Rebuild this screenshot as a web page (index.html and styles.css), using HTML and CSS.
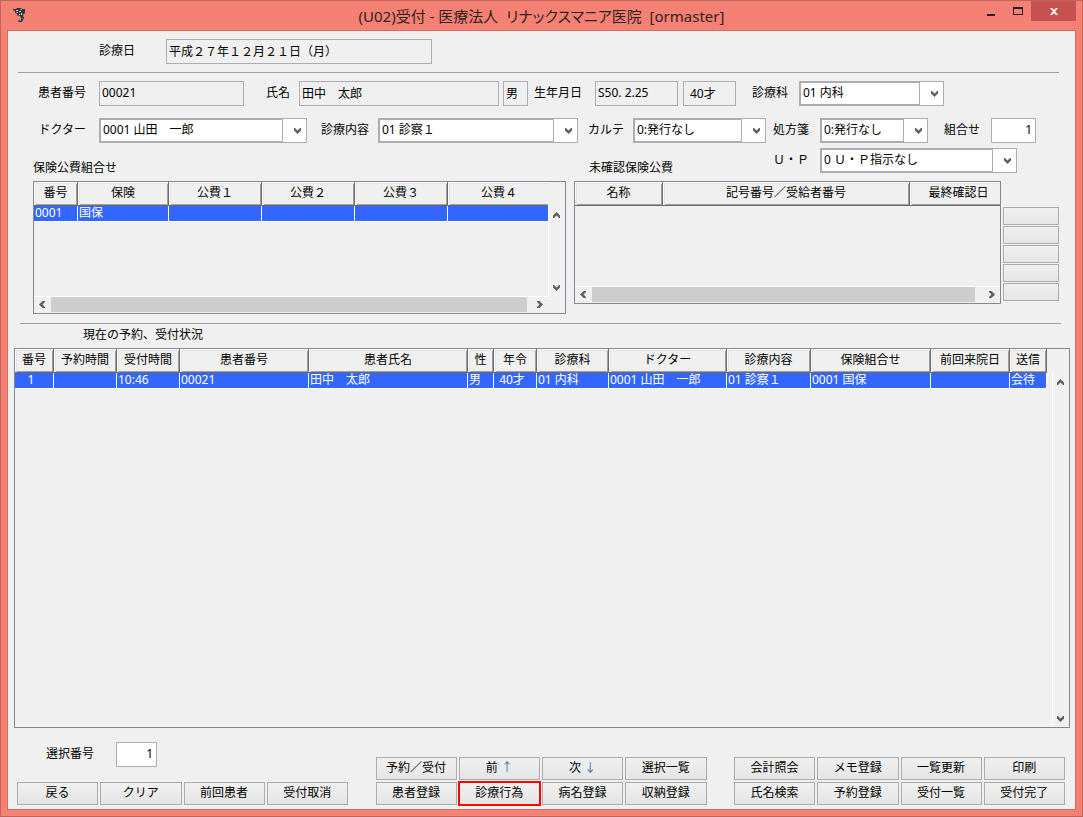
FILE: index.html
```html
<!DOCTYPE html>
<html lang="ja">
<head>
<meta charset="utf-8">
<title>(U02)受付 - 医療法人 リナックスマニア医院 [ormaster]</title>
<link rel="stylesheet" href="styles.css">
</head>
<body>
<svg class="defs" aria-hidden="true">
  <symbol id="down" viewBox="0 0 7 6"><path d="M0 0h1l2.500 2.500L6 0h1v2.500L3.500 6 0 2.500z" fill="#606060"/></symbol>
  <symbol id="up" viewBox="0 0 7 6"><path d="M0 6h1l2.500-2.500L6 6h1V3.500L3.500 0 0 3.500z" fill="#606060"/></symbol>
  <symbol id="left" viewBox="0 0 6 7"><path d="M6 0v1L3.500 3.500 6 6v1H3.500L0 3.500 3.500 0z" fill="#606060"/></symbol>
  <symbol id="right" viewBox="0 0 6 7"><path d="M0 0v1l2.500 2.500L0 6v1h2.500L6 3.500 2.500 0z" fill="#606060"/></symbol>
</svg>
<div class="window">
  <header class="titlebar">
    <svg class="app-icon" viewBox="0 0 14 16" width="14" height="16" aria-hidden="true">
      <path d="M0 1h3l1-1h4l1 1h3v4l-1 1v4l-1 2-1 2H6l-1-1 1-1h2v-2L7 8H6L4 7V6L2 5V3L0 2z" fill="#33363a"/>
      <path d="M3 2h2v1H3zM6 3h2v1H6zM4 4h1v1H4zM8 5h1v2H8zM6 6h1v1H6z" fill="#e8e8e8"/>
      <path d="M10 6h1v3h-1zM9 10h1v1H9zM7 1h2v1H7zM3 4h1v1H3zM7 12h1v1H7z" fill="#8d9092"/>
    </svg>
    <h1 class="title">(U02)受付 - 医療法人  リナックスマニア医院  [ormaster]</h1>
    <div class="caption-buttons">
      <button type="button" class="cap" aria-label="最小化"><svg width="8" height="11" viewBox="0 0 8 11"><path d="M0 8h8v2H0z" fill="#222"/></svg></button>
      <button type="button" class="cap" aria-label="最大化"><svg width="10" height="11" viewBox="0 0 10 11"><path d="M0 1h10v8H0zM1 3v5h8V3z" fill="#222" fill-rule="evenodd"/></svg></button>
      <button type="button" class="cap close" aria-label="閉じる"><svg width="8" height="7" viewBox="0 0 8 7"><path d="M0 0h2l2 2 2-2h2L5 3.500 8 7H6L4 5 2 7H0l3-3.500z" fill="#fff"/></svg></button>
    </div>
  </header>

  <main class="client">
    <div class="row row-date">
      <label class="label label-date" for="date">診療日</label>
      <input class="box" id="date" readonly value="平成２７年１２月２１日（月）">
    </div>
    <hr class="rule">
    <div class="row row-patient">
      <label class="label wide" for="pid">患者番号</label>
      <input class="box" id="pid" readonly value="00021">
      <label class="label tight" for="pname">氏名</label>
      <input class="box" id="pname" readonly value="田中　太郎">
      <input class="box apart" aria-label="性別" readonly value="男">
      <label class="label wide" for="birth">生年月日</label>
      <input class="box" id="birth" readonly value="S50. 2.25">
      <input class="box apart age" aria-label="年齢" readonly value="40才">
      <label class="label" for="dept">診療科</label>
      <span class="combo"><select id="dept"><option>01 内科</option></select><svg class="v"><use href="#down"/></svg></span>
    </div>
    <div class="row row-visit">
      <label class="label wide" for="doctor">ドクター</label>
      <span class="combo"><select id="doctor"><option>0001 山田　一郎</option></select><svg class="v"><use href="#down"/></svg></span>
      <label class="label tight" for="content">診療内容</label>
      <span class="combo"><select id="content"><option>01 診察１</option></select><svg class="v"><use href="#down"/></svg></span>
      <label class="label tight" for="karte">カルテ</label>
      <span class="combo"><select id="karte"><option>0:発行なし</option></select><svg class="v"><use href="#down"/></svg></span>
      <label class="label" for="rx">処方箋</label>
      <span class="combo"><select id="rx"><option>0:発行なし</option></select><svg class="v"><use href="#down"/></svg></span>
      <label class="label" for="set">組合せ</label>
      <input class="box edit" id="set" value="1">
    </div>

    <div class="panels">
      <section class="insurance">
        <h2 class="heading">保険公費組合せ</h2>
        <div class="panel">
          <div class="view">
            <table class="list insurance-list">
              <thead><tr><th>番号</th><th>保険</th><th>公費１</th><th>公費２</th><th>公費３</th><th>公費４</th></tr></thead>
              <tbody><tr><td>0001</td><td>国保</td><td></td><td></td><td></td><td></td></tr></tbody>
            </table>
          </div>
          <div class="vbar"><svg class="v"><use href="#up"/></svg><svg class="v"><use href="#down"/></svg></div>
          <div class="hbar"><svg class="h"><use href="#left"/></svg><span class="thumb short"></span><svg class="h"><use href="#right"/></svg></div>
        </div>
      </section>
      <section class="unconfirmed">
        <div class="up-line">
          <h2 class="heading">未確認保険公費</h2>
          <label class="label" for="up-select">Ｕ・Ｐ</label>
          <span class="combo up-combo"><select id="up-select"><option>0 Ｕ・Ｐ指示なし</option></select><svg class="v"><use href="#down"/></svg></span>
        </div>
        <div class="with-side">
          <div class="panel plain">
            <div class="view">
              <table class="list unconfirmed-list">
                <thead><tr><th>名称</th><th>記号番号／受給者番号</th><th>最終確認日</th></tr></thead>
              </table>
            </div>
            <div class="hbar"><svg class="h"><use href="#left"/></svg><span class="thumb"></span><svg class="h"><use href="#right"/></svg></div>
          </div>
          <div class="side">
            <button type="button" class="btn" aria-label="操作1"></button>
            <button type="button" class="btn" aria-label="操作2"></button>
            <button type="button" class="btn" aria-label="操作3"></button>
            <button type="button" class="btn" aria-label="操作4"></button>
            <button type="button" class="btn" aria-label="操作5"></button>
          </div>
        </div>
      </section>
    </div>

    <hr class="rule lower">
    <h2 class="status-heading">現在の予約、受付状況</h2>
    <div class="panel status">
      <div class="view">
        <table class="list status-list">
          <thead><tr><th>番号</th><th>予約時間</th><th>受付時間</th><th>患者番号</th><th>患者氏名</th><th>性</th><th>年令</th><th>診療科</th><th>ドクター</th><th>診療内容</th><th>保険組合せ</th><th>前回来院日</th><th>送信</th></tr></thead>
          <tbody><tr><td class="mid">1</td><td></td><td>10:46</td><td>00021</td><td>田中　太郎</td><td>男</td><td class="mid">40才</td><td>01 内科</td><td>0001 山田　一郎</td><td>01 診察１</td><td>0001 国保</td><td></td><td>会待</td></tr></tbody>
        </table>
      </div>
      <div class="vbar"><svg class="v"><use href="#up"/></svg><svg class="v"><use href="#down"/></svg></div>
    </div>

    <footer class="actions">
      <div class="group">
        <div class="pick">
          <label for="pick">選択番号</label>
          <input class="box edit" id="pick" value="1">
        </div>
        <div class="keys">
          <button type="button" class="btn">戻る</button>
          <button type="button" class="btn">クリア</button>
          <button type="button" class="btn">前回患者</button>
          <button type="button" class="btn">受付取消</button>
        </div>
      </div>
      <div class="keys">
        <button type="button" class="btn">予約／受付</button>
        <button type="button" class="btn">前 <span class="arrow">↑</span></button>
        <button type="button" class="btn">次 <span class="arrow">↓</span></button>
        <button type="button" class="btn">選択一覧</button>
        <button type="button" class="btn">患者登録</button>
        <button type="button" class="btn marked">診療行為</button>
        <button type="button" class="btn">病名登録</button>
        <button type="button" class="btn">収納登録</button>
      </div>
      <div class="keys">
        <button type="button" class="btn">会計照会</button>
        <button type="button" class="btn">メモ登録</button>
        <button type="button" class="btn">一覧更新</button>
        <button type="button" class="btn">印刷</button>
        <button type="button" class="btn">氏名検索</button>
        <button type="button" class="btn">予約登録</button>
        <button type="button" class="btn">受付一覧</button>
        <button type="button" class="btn">受付完了</button>
      </div>
    </footer>
  </main>
</div>
</body>
</html>
```
FILE: styles.css
```css
* { box-sizing: border-box; }

body {
  margin: 0;
  color: #000;
  font: 12px/16px "Noto Sans", "Noto Sans CJK JP", sans-serif;
}

button, input, select { font: inherit; color: inherit; margin: 0; }
h1, h2 { margin: 0; font-size: 12px; font-weight: 400; }
.defs { display: none; }

/* Window frame */
.window {
  display: flex;
  flex-direction: column;
  min-height: 100vh;
  padding: 0 6px 6px;
  border: 1px solid #be655c;
  background: #f58174;
}

.titlebar {
  display: grid;
  grid-template-columns: 1fr auto 1fr;
  height: 29px;
}

.app-icon { margin: 7px 0 0 6px; }

.title {
  align-self: center;
  color: #33201e;
  font-size: 15px;
  line-height: 20px;
  font-feature-settings: "palt";
  white-space: pre;
}

.caption-buttons { display: flex; justify-content: flex-end; }

.cap {
  display: flex;
  align-items: center;
  justify-content: center;
  width: 27px;
  height: 20px;
  padding: 0;
  border: 0;
  background: none;
}

.cap.close { width: 45px; background: #c75050; }

.client {
  display: flex;
  flex-direction: column;
  flex: 1;
  padding-top: 8px;
  border: 1px solid #cf6e64;
  background: #f0f0f0;
}

.rule {
  width: auto;
  height: 1px;
  margin: 8px 16px 8px 10px;
  border: 0;
  background: #a0a0a0;
}

.rule.lower { margin: 9px 14px 0 12px; }

/* Form rows */
.row { display: grid; align-items: center; }
.row-date { grid-template-columns: 158px 266px; }
.row-patient { grid-template-columns: 91px 145px 55px 200px 29px 67px 83px 58px 63px 145px; }
.row-visit {
  grid-template-columns: 91px 208px 71px 200px 55px 133px 54px 108px 63px 45px;
  margin: 12px 0 5px;
}

.label { padding: 0 11px 2px 0; text-align: right; white-space: nowrap; }
.label.wide { padding-right: 13px; }
.label.tight { padding-right: 9px; }
.label-date { padding-right: 31px; }

.box {
  width: 100%;
  min-width: 0;
  height: 25px;
  padding: 0 2px 2px;
  border: 1px solid #abadb3;
  border-radius: 0;
  background: #f0f0f0;
}

.box.apart { width: auto; margin-left: 4px; }
.box.age { margin-left: 5px; padding-left: 6px; }
.box.edit { padding-right: 3px; background: #fff; text-align: right; }

/* Drop-down: text frame on the left, arrow cell on the right */
.combo {
  display: grid;
  height: 25px;
  border: 1px solid #abadb3;
  background: #fff;
}

.combo > *, .combo::after { grid-area: 1 / 1; }

.combo select {
  width: 100%;
  min-width: 0;
  padding: 0 24px 2px 3px;
  border: 0;
  border-radius: 0;
  background: transparent;
  appearance: none;
}

.combo::after {
  content: "";
  margin-right: 23px;
  border: 1px solid #abadb3;
  pointer-events: none;
}

.combo svg {
  place-self: center end;
  margin: 1px 5px 0 0;
  pointer-events: none;
}

svg.v { width: 7px; height: 6px; }
svg.h { width: 6px; height: 7px; }

/* Upper panels */
.panels {
  display: grid;
  grid-template-columns: 533fr 485fr;
  gap: 8px;
  padding: 0 16px 0 25px;
}

.heading { height: 33px; padding-top: 12px; }
.up-line { display: flex; align-items: flex-start; }
.up-line .heading { flex: 1; padding: 12px 0 0 15px; }
.up-line .label { padding-top: 4px; }
.up-combo { width: 197px; margin-right: 42px; }
.with-side { display: flex; align-items: flex-start; gap: 2px; }

.panel {
  display: grid;
  grid-template-columns: 1fr 17px;
  border: 1px solid #828790;
}

.panel.plain { flex: 1; grid-template-columns: 1fr; }
.view { min-width: 0; min-height: 114px; }
.plain .view { min-height: 104px; }

.list {
  width: 100%;
  border-spacing: 0;
  table-layout: fixed;
  white-space: nowrap;
}

.list th {
  height: 24px;
  padding: 0 0 2px;
  border: solid #696969;
  border-width: 0 1px 1px 0;
  box-shadow: inset 1px 1px #fff, inset 2px 2px #e3e3e3, inset -1px -1px #a0a0a0;
  font-weight: 400;
  line-height: 20px;
}

.list td {
  height: 16px;
  padding: 0 0 1px 1px;
  border: solid #fff;
  border-width: 0 1px 1px 0;
  background: #3366ff;
  color: #fff;
  line-height: 14px;
}

.list td.mid { padding: 0 6px 1px 0; text-align: center; }

.insurance-list th:nth-child(1) { width: 44px; }
.insurance-list th:nth-child(2) { width: 91px; }
.insurance-list th:nth-child(n+3) { width: 93px; }
.insurance-list th:nth-child(6) { width: 100px; padding-left: 2px; }
.insurance-list td:last-child { border-right: 0; }
.insurance-list th:last-child,
.unconfirmed-list th:last-child {
  border-right: 0;
  box-shadow: inset 1px 1px #fff, inset 2px 2px #e3e3e3, inset 0 -1px #a0a0a0;
}

.unconfirmed-list th:nth-child(1) { width: 88px; }
.unconfirmed-list th:nth-child(2) { width: 247px; }
.unconfirmed-list th:nth-child(3) { width: 90px; padding-left: 7px; }

.status-list th:nth-child(1) { width: 39px; }
.status-list th:nth-child(2), .status-list th:nth-child(3) { width: 63px; }
.status-list th:nth-child(4) { width: 129px; }
.status-list th:nth-child(5) { width: 159px; }
.status-list th:nth-child(6) { width: 26px; }
.status-list th:nth-child(7) { width: 43px; }
.status-list th:nth-child(8) { width: 72px; }
.status-list th:nth-child(9) { width: 118px; }
.status-list th:nth-child(10) { width: 84px; }
.status-list th:nth-child(11) { width: 120px; }
.status-list th:nth-child(12) { width: 79px; }
.status-list th:nth-child(13) { width: 37px; }

/* Scroll bars */
.vbar {
  display: flex;
  flex-direction: column;
  justify-content: space-between;
  align-items: flex-start;
  margin-top: 24px;
  padding: 6px 4px 5px;
  border-left: 1px solid #fff;
}

.hbar {
  display: flex;
  align-items: flex-start;
  justify-content: space-between;
  height: 17px;
  padding: 0 5px;
  border-top: 1px solid #fff;
}

.hbar svg { margin-top: 4px; }
.thumb { flex: 1; height: 15px; margin: 0 14px 0 6px; background: #cdcdcd; }
.thumb.short { margin-right: 10px; }

.side {
  display: grid;
  gap: 1px;
  width: 56px;
  margin-top: 26px;
}

.btn {
  min-width: 0;
  height: 23px;
  padding: 0 0 2px;
  border: 1px solid #acacac;
  border-radius: 0;
  background: linear-gradient(#f0f0f0, #e5e5e5);
  white-space: nowrap;
}

.side .btn { height: 18px; }
.btn.marked { outline: 2px solid #ff0000; outline-offset: -1px; }
.arrow { color: #3c6f9c; }

/* Reception list */
.status-heading { height: 24px; padding: 3px 0 0 75px; }
.status { flex: 1; margin: 0 5px 0 6px; }
.status .view { padding-right: 5px; }

/* Bottom buttons */
.actions {
  display: flex;
  justify-content: space-between;
  align-items: flex-end;
  padding: 14px 10px 4px 9px;
}

.keys {
  display: grid;
  grid-template-columns: repeat(4, 1fr);
  gap: 2px;
  width: 331px;
}

.pick {
  display: flex;
  align-items: center;
  gap: 22px;
  margin: 0 0 15px 29px;
}

.pick label { padding-bottom: 2px; }
.pick .box { width: 41px; }
```
